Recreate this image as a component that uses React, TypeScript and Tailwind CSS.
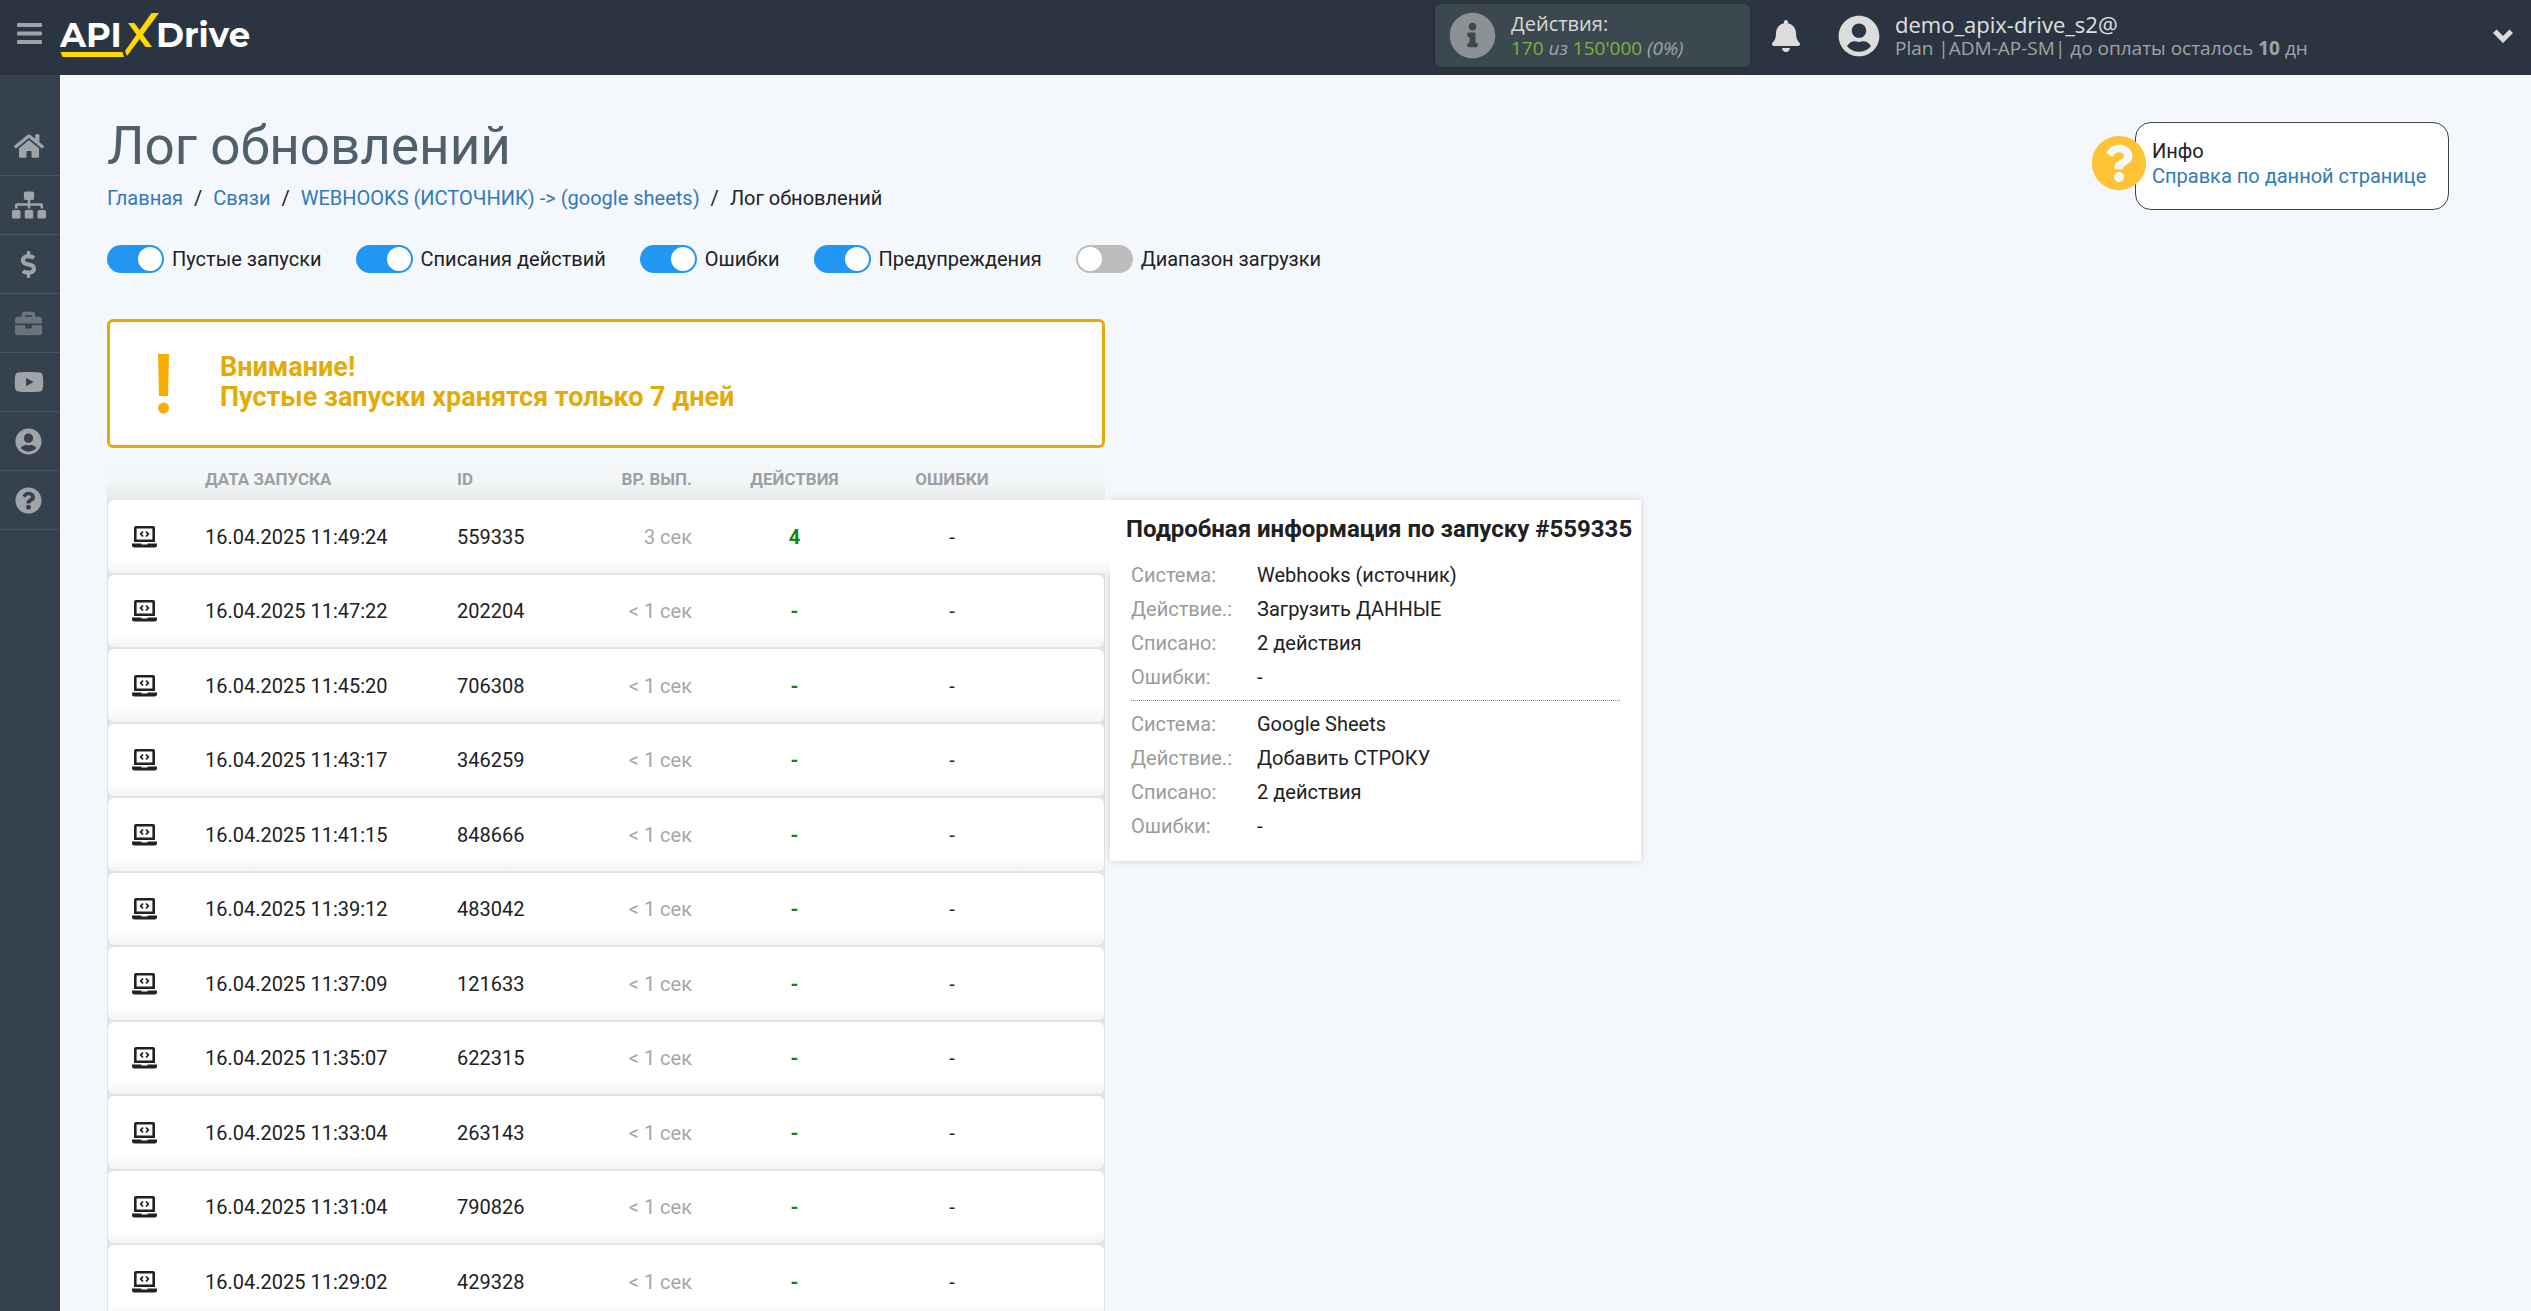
import { useState } from 'react'
import {
  FaBell,
  FaBriefcase,
  FaDollarSign,
  FaHome,
  FaInfoCircle,
  FaQuestionCircle,
  FaSitemap,
  FaUserCircle,
  FaYoutube,
} from 'react-icons/fa'
import type { IconType } from 'react-icons'

interface NavItem {
  label: string
  icon: IconType
  size: number
  muted?: boolean
}

interface LogRow {
  date: string
  id: string
  duration: string
  actions: string
  errors: string
}

interface RunStep {
  system: string
  action: string
  charged: string
  errors: string
}

const navItems: NavItem[] = [
  { label: 'Главная', icon: FaHome, size: 30 },
  { label: 'Связи', icon: FaSitemap, size: 34 },
  { label: 'Оплата', icon: FaDollarSign, size: 27 },
  { label: 'Инструменты', icon: FaBriefcase, size: 27, muted: true },
  { label: 'Видео', icon: FaYoutube, size: 30 },
  { label: 'Профиль', icon: FaUserCircle, size: 27 },
  { label: 'Помощь', icon: FaQuestionCircle, size: 27 },
]

const filters = [
  { id: 'empty', label: 'Пустые запуски', on: true },
  { id: 'charges', label: 'Списания действий', on: true },
  { id: 'errors', label: 'Ошибки', on: true },
  { id: 'warnings', label: 'Предупреждения', on: true },
  { id: 'range', label: 'Диапазон загрузки', on: false },
]

const rows: LogRow[] = [
  { date: '16.04.2025 11:49:24', id: '559335', duration: '3 сек', actions: '4', errors: '-' },
  { date: '16.04.2025 11:47:22', id: '202204', duration: '< 1 сек', actions: '-', errors: '-' },
  { date: '16.04.2025 11:45:20', id: '706308', duration: '< 1 сек', actions: '-', errors: '-' },
  { date: '16.04.2025 11:43:17', id: '346259', duration: '< 1 сек', actions: '-', errors: '-' },
  { date: '16.04.2025 11:41:15', id: '848666', duration: '< 1 сек', actions: '-', errors: '-' },
  { date: '16.04.2025 11:39:12', id: '483042', duration: '< 1 сек', actions: '-', errors: '-' },
  { date: '16.04.2025 11:37:09', id: '121633', duration: '< 1 сек', actions: '-', errors: '-' },
  { date: '16.04.2025 11:35:07', id: '622315', duration: '< 1 сек', actions: '-', errors: '-' },
  { date: '16.04.2025 11:33:04', id: '263143', duration: '< 1 сек', actions: '-', errors: '-' },
  { date: '16.04.2025 11:31:04', id: '790826', duration: '< 1 сек', actions: '-', errors: '-' },
  { date: '16.04.2025 11:29:02', id: '429328', duration: '< 1 сек', actions: '-', errors: '-' },
]

const steps: RunStep[] = [
  { system: 'Webhooks (источник)', action: 'Загрузить ДАННЫЕ', charged: '2 действия', errors: '-' },
  { system: 'Google Sheets', action: 'Добавить СТРОКУ', charged: '2 действия', errors: '-' },
]

const rowGrid = 'grid grid-cols-[97px_252px_130px_105px_205px_110px_1fr] items-center'

function Logo() {
  return (
    <a href="#" aria-label="APIXDrive" className="block">
      <svg width="194" height="46" viewBox="0 0 194 46">
        <g fill="#fff" fontFamily="Montserrat, Inter, sans-serif" fontWeight="700" fontSize="34">
          <text x="0" y="34">API</text>
          <text x="96" y="34">Drive</text>
        </g>
        <path fill="#ffd800" d="M91.500 0H99L67 43l-2-5z" />
        <path fill="#ffd800" d="M68 10h6.500L92 34h-6.500z" />
        <path fill="#ffd800" d="M.5 39h62l1.500 5H2.500z" />
      </svg>
    </a>
  )
}

function LaptopCodeIcon() {
  return (
    <svg width="25" height="22" viewBox="0 0 25 22" className="text-[#212121]">
      <path
        fill="currentColor"
        fillRule="evenodd"
        d="M4 0h17a2 2 0 0 1 2 2v14H2V2a2 2 0 0 1 2-2zm.6 2.600v10.800h15.800V2.600z"
      />
      <path fill="currentColor" d="M0 17.400h9.500v1h6v-1H25v1.600a2.500 2.500 0 0 1-2.500 2.500h-20A2.500 2.500 0 0 1 0 19z" />
      <path fill="none" stroke="currentColor" strokeWidth="1.800" d="M11 5.500 8.700 8l2.300 2.500M14 5.500 16.300 8 14 10.500" />
    </svg>
  )
}

function Header() {
  return (
    <header className="flex h-[75px] shrink-0 items-center bg-[#2b3541] pb-1">
      <button type="button" aria-label="Меню" className="flex w-15 shrink-0 justify-center pr-[2px] text-[#9fa3a7]">
        <svg width="25" height="25" viewBox="0 0 25 25" fill="currentColor">
          <rect y="0" width="25" height="4" rx="1" />
          <rect y="8.500" width="25" height="4" rx="1" />
          <rect y="17" width="25" height="4" rx="1" />
        </svg>
      </button>
      <Logo />
      <div className="ml-auto flex items-center font-['Open_Sans',sans-serif]">
        <div className="flex h-[63px] w-[315px] items-center gap-[15px] rounded-md bg-[#3c484f] px-[14px] shadow">
          <FaInfoCircle size={47} className="text-[#8b9194]" />
          <div className="leading-[25px]">
            <div className="text-[20px] text-[#d8d8d8]">Действия:</div>
            <div className="text-[19px] text-[#a0a4a8]">
              <span className="text-[#7cb342]">170</span> <i>из</i> <span className="text-[#7cb342]">150'000</span>{' '}
              <i>(0%)</i>
            </div>
          </div>
        </div>
        <button type="button" aria-label="Уведомления" className="ml-5 text-[#dcdcdc]">
          <FaBell size={32} />
        </button>
        <button type="button" className="ml-9 flex w-[693px] items-center text-left">
          <FaUserCircle size={42} className="text-[#dcdcdc]" />
          <span className="ml-[15px] block leading-[24px]">
            <span className="block text-[22px] text-[#e0e0e0]">demo_apix-drive_s2@</span>
            <span className="block text-[19px] text-[#a0a4a8]">
              Plan |ADM-AP-SM| до оплаты осталось <b>10</b> дн
            </span>
          </span>
          <svg width="20" height="14" viewBox="0 0 20 14" className="mr-[18px] ml-auto text-[#dcdcdc]">
            <path fill="none" stroke="currentColor" strokeWidth="5" d="M1.800 2.300 10 10.500l8.200-8.200" />
          </svg>
        </button>
      </div>
    </header>
  )
}

function Sidebar() {
  return (
    <nav className="w-15 shrink-0 bg-[#36414e] pt-[42px]">
      {navItems.map(({ label, icon: Icon, size, muted }) => (
        <a
          key={label}
          href="#"
          aria-label={label}
          className={`flex h-[59px] items-center justify-center border-b border-[#4a5561] pr-[3px] ${
            muted ? 'text-[#6b737d]' : 'text-[#a0a4a8]'
          }`}
        >
          <Icon size={size} />
        </a>
      ))}
    </nav>
  )
}

function Breadcrumbs() {
  return (
    <div className="mt-3 flex gap-[11px] text-[20px] leading-[28px]">
      <a href="#" className="text-[#337ab7]">Главная</a>
      <span>/</span>
      <a href="#" className="text-[#337ab7]">Связи</a>
      <span>/</span>
      <a href="#" className="text-[#337ab7]">WEBHOOKS (ИСТОЧНИК) -&gt; (google sheets)</a>
      <span>/</span>
      <span>Лог обновлений</span>
    </div>
  )
}

function Filters() {
  const [state, setState] = useState(() => Object.fromEntries(filters.map((f) => [f.id, f.on])))

  return (
    <div className="mt-[33px] flex gap-[34px] text-[20px] leading-[28px]">
      {filters.map((f) => (
        <label key={f.id} htmlFor={f.id} className="flex cursor-pointer items-center gap-2">
          <input
            id={f.id}
            type="checkbox"
            checked={state[f.id]}
            onChange={() => setState({ ...state, [f.id]: !state[f.id] })}
            className="h-7 w-[57px] cursor-pointer appearance-none rounded-full bg-[#bdbdbd] p-[2px] before:block before:size-6 before:rounded-full before:bg-white checked:bg-[#2196f3] checked:pl-[31px]"
          />
          {f.label}
        </label>
      ))}
    </div>
  )
}

function Notice() {
  return (
    <div className="mt-[46px] flex w-[998px] items-center rounded-md border-3 border-[#e3ab06] bg-white py-[30px]">
      <svg width="12" height="60" viewBox="0 0 12 60" className="ml-12" fill="#f9ad00">
        <path d="M0 0h11l-1 42H1z" />
        <circle cx="5.500" cy="54" r="5.500" />
      </svg>
      <div className="ml-[50px] pb-[3px] text-[27px] leading-[30px] font-bold text-[#e3ab06]">
        <p>Внимание!</p>
        <p>Пустые запуски хранятся только 7 дней</p>
      </div>
    </div>
  )
}

function LogTable() {
  return (
    <table className="block w-[998px] text-[20px]">
      <thead className="block">
        <tr
          className={`${rowGrid} h-[41px] bg-linear-to-b from-[#f4f7fc] via-[#f3f7f8] to-[#e6eaea] px-px text-[17px] text-[#9e9ea3]`}
        >
          <th aria-label="Тип" />
          <th className="text-left font-bold">ДАТА ЗАПУСКА</th>
          <th className="text-left font-bold">ID</th>
          <th className="text-right font-bold">ВР. ВЫП.</th>
          <th className="text-center font-bold">ДЕЙСТВИЯ</th>
          <th className="text-center font-bold">ОШИБКИ</th>
          <th />
        </tr>
      </thead>
      <tbody className="flex flex-col gap-[2px] bg-[#e2e3e4] px-px">
        {rows.map((row) => (
          <tr
            key={row.id}
            className={`${rowGrid} h-[72px] rounded-md bg-linear-to-b from-white from-80% to-[#f4f4f4] odd:h-[73px] first:relative first:z-10 first:-mr-[6px] first:rounded-r-none`}
          >
            <td className="pl-[24px]"><LaptopCodeIcon /></td>
            <td>{row.date}</td>
            <td>{row.id}</td>
            <td className="text-right text-[#a7a7a7]">{row.duration}</td>
            <td className="text-center font-bold text-[#0a8a0a]">{row.actions}</td>
            <td className="text-center">{row.errors}</td>
            <td />
          </tr>
        ))}
      </tbody>
    </table>
  )
}

function RunDetails() {
  return (
    <aside className="mt-[41px] ml-[5px] w-[531px] bg-white pt-[13px] pb-[18px] shadow-[0_0_8px_rgba(0,0,0,0.16)]">
      <h2 className="px-4 pb-[13px] text-[24px] leading-[32px] font-bold whitespace-nowrap">
        Подробная информация по запуску #559335
      </h2>
      <div className="px-[21px]">
        {steps.map((step) => (
          <dl
            key={step.system}
            className="grid grid-cols-[126px_1fr] border-dotted border-[#8a8a8a] text-[20px] leading-[34px] not-first:border-t not-first:pt-[6px] not-last:pb-[6px]"
          >
            <dt className="text-[#9b9b9b]">Система:</dt>
            <dd>{step.system}</dd>
            <dt className="text-[#9b9b9b]">Действие.:</dt>
            <dd>{step.action}</dd>
            <dt className="text-[#9b9b9b]">Списано:</dt>
            <dd>{step.charged}</dd>
            <dt className="text-[#9b9b9b]">Ошибки:</dt>
            <dd>{step.errors}</dd>
          </dl>
        ))}
      </div>
    </aside>
  )
}

function HelpBox() {
  return (
    <div className="relative mt-[2px] h-[88px] w-[314px] rounded-2xl border border-[#424242] bg-white pt-4 pl-4 text-[20px] leading-[25px]">
      <FaQuestionCircle size={56} className="absolute top-3 -left-[45px] text-[#ffc435]" />
      <p>Инфо</p>
      <a href="#" className="text-[#337ab7]">Справка по данной странице</a>
    </div>
  )
}

export default function App() {
  return (
    <div className="flex h-screen flex-col overflow-hidden bg-[#f4f7fc] font-['Roboto',sans-serif] text-[#212121]">
      <Header />
      <div className="flex min-h-0 grow">
        <Sidebar />
        <main className="grow overflow-y-auto pt-[45px] pl-[47px] [scrollbar-width:none]">
          <div className="flex items-start justify-between pr-[82px]">
            <div>
              <h1 className="text-[53px] leading-[52px] text-[#4f5f6b]">Лог обновлений</h1>
              <Breadcrumbs />
              <Filters />
            </div>
            <HelpBox />
          </div>
          <Notice />
          <div className="mt-[11px] flex items-start">
            <LogTable />
            <RunDetails />
          </div>
        </main>
      </div>
    </div>
  )
}
